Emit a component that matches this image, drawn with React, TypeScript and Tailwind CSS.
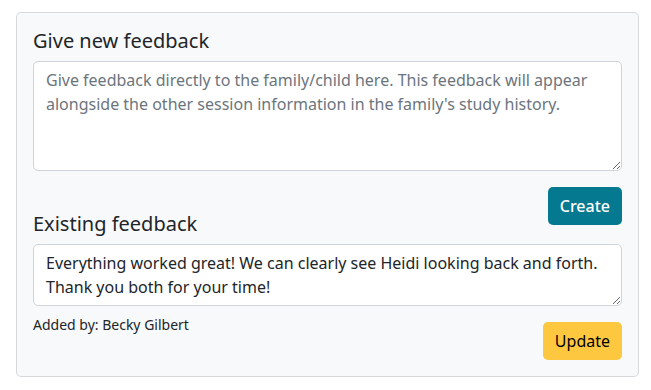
export default function App() {
  return (
    <div className="min-h-screen bg-white pl-4 pr-3 pt-3 font-['Noto_Sans',sans-serif] text-[#212529]">
      <div className="flow-root rounded-[5px] border border-[#d6d8db] bg-[#f8f9fa] p-4">
        {/* New feedback */}
        <h5 className="mb-2 text-[20px] font-normal leading-[24px]">Give new feedback</h5>
        <textarea
          rows={4}
          className="block w-full resize-y rounded-[5px] border border-[#ced4da] bg-white px-3 py-[6px] text-[16px] leading-[24px] placeholder:text-[#6c757d] focus:outline-none"
          placeholder="Give feedback directly to the family/child here. This feedback will appear alongside the other session information in the family's study history."
        />
        <div className="mt-4 flex h-[25px] justify-end">
          <button className="h-[38px] shrink-0 rounded-[5px] bg-[#05798f] px-3 text-[16px] font-medium leading-[24px] text-white">
            Create
          </button>
        </div>

        {/* Existing feedback */}
        <h5 className="mb-2 text-[20px] font-normal leading-[24px]">Existing feedback</h5>
        <textarea
          rows={2}
          className="block w-full resize-y rounded-[5px] border border-[#ced4da] bg-white px-3 py-[6px] text-[16px] leading-[24px] focus:outline-none"
          defaultValue="Everything worked great! We can clearly see Heidi looking back and forth. Thank you both for your time!"
        />
        <div className="flex items-start justify-between">
          <div className="mt-2 text-[14px] leading-[21px]">Added by: Becky Gilbert</div>
          <button className="mt-4 h-[38px] rounded-[5px] bg-[#fdc840] px-3 text-[16px] leading-[24px] text-black">
            Update
          </button>
        </div>
      </div>
    </div>
  );
}
